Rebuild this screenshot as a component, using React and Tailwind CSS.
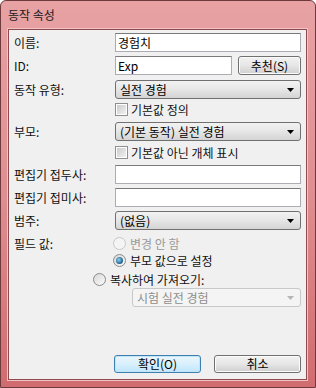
import React from "react";

const font = { fontFamily: '"Noto Sans CJK KR", "Noto Sans", sans-serif' };

function Label({ children }) {
  return <div className="w-[101px] shrink-0 text-[12px] leading-none text-[#111]">{children}</div>;
}

function TextBox({ value, className = "" }) {
  return (
    <div className={`flex h-[19px] items-center border border-[#abadb3] border-t-[#7a7a7a] bg-white px-[2px] text-[12px] leading-none text-black ${className}`}>
      {value}
    </div>
  );
}

function Arrow({ disabled }) {
  return (
    <svg width="7" height="4" viewBox="0 0 7 4" className="shrink-0">
      <path d="M0 0h7L3.5 4z" fill={disabled ? "#b5b5b5" : "#000"} />
    </svg>
  );
}

function Combo({ value, disabled, className = "" }) {
  return (
    <div
      className={
        disabled
          ? `flex h-[19px] items-center justify-between rounded-[3px] border border-[#c6c8ca] bg-[#f4f4f4] pl-[4px] pr-[6px] text-[12px] leading-none text-[#8d8d8d] ${className}`
          : `flex h-[19px] items-center justify-between rounded-[3px] border border-[#707070] bg-gradient-to-b from-[#f2f2f2] via-[#e6e6e6] to-[#d4d4d4] pl-[4px] pr-[6px] text-[12px] leading-none text-black ${className}`
      }
    >
      <span>{value}</span>
      <Arrow disabled={disabled} />
    </div>
  );
}

function Check({ label }) {
  return (
    <div className="flex h-[13px] items-center gap-[3px] text-[12px] leading-none text-[#111]">
      <span className="flex h-[13px] w-[13px] items-center justify-center border border-[#8e8f8f] bg-white">
        <span className="h-[9px] w-[9px] bg-gradient-to-br from-[#cbcbcb] to-[#f1f1f1]" />
      </span>
      {label}
    </div>
  );
}

function Radio({ label, checked, disabled }) {
  return (
    <div className={`flex h-[13px] items-center gap-[4px] text-[12px] leading-none ${disabled ? "text-[#9a9a9a]" : "text-[#111]"}`}>
      <span
        className={`flex h-[13px] w-[13px] items-center justify-center rounded-full border ${
          disabled ? "border-[#c8c8c8] bg-[#f4f4f4]" : "border-[#8a8a8a] bg-gradient-to-br from-[#d8d8d8] to-[#fafafa]"
        }`}
      >
        {checked && <span className="h-[7px] w-[7px] rounded-full bg-[radial-gradient(circle_at_40%_40%,#8fd3f0,#1d5c8c_70%)]" />}
      </span>
      {label}
    </div>
  );
}

function Button({ children, focused }) {
  return (
    <div
      className={`flex h-[18px] w-[87px] items-center justify-center rounded-[3px] border text-[12px] leading-none text-black ${
        focused
          ? "border-[#3c7fb1] bg-gradient-to-b from-[#eaf6fd] via-[#d9f0fc] to-[#bee6fd] shadow-[inset_0_0_0_1px_#c4e5f6]"
          : "border-[#707070] bg-gradient-to-b from-[#f2f2f2] via-[#e6e6e6] to-[#cfcfcf] shadow-[inset_0_0_0_1px_#fbfbfb]"
      }`}
    >
      {children}
    </div>
  );
}

export default function App() {
  return (
    <div
      style={font}
      className="flex h-[388px] w-[316px] flex-col overflow-hidden rounded-t-[6px] border border-[#6e3b3c] bg-gradient-to-b from-[#e8a2a4] via-[#df8e91] to-[#d06c70]"
    >
      <div className="flex h-[28px] shrink-0 items-center pl-[7px] text-[12px] text-[#1b1b1b]">동작 속성</div>

      <div className="mb-[7px] ml-[7px] mr-[8px] flex flex-1 flex-col border border-[#8e4a4d] bg-[#f0f0f0] px-[5px] shadow-[0_0_0_1px_#f0c4c5]">
        <div className="mt-[3px] flex h-[19px] items-center">
          <Label>이름:</Label>
          <TextBox value="경험치" className="flex-1" />
        </div>

        <div className="mt-[4px] flex h-[19px] items-center">
          <Label>ID:</Label>
          <TextBox value="Exp" className="w-[117px]" />
          <div className="ml-auto">
            <div className="flex h-[19px] w-[63px] items-center justify-center rounded-[3px] border border-[#707070] bg-gradient-to-b from-[#f2f2f2] via-[#e6e6e6] to-[#cfcfcf] text-[12px] leading-none shadow-[inset_0_0_0_1px_#fbfbfb]">
              추천(S)
            </div>
          </div>
        </div>

        <div className="mt-[5px] flex h-[19px] items-center">
          <Label>동작 유형:</Label>
          <Combo value="실전 경험" className="flex-1" />
        </div>

        <div className="mt-[4px] flex items-center pl-[101px]">
          <Check label="기본값 정의" />
        </div>

        <div className="mt-[6px] flex h-[19px] items-center">
          <Label>부모:</Label>
          <Combo value="(기본 동작) 실전 경험" className="flex-1" />
        </div>

        <div className="mt-[5px] flex items-center pl-[101px]">
          <Check label="기본값 아닌 개체 표시" />
        </div>

        <div className="mt-[6px] flex h-[19px] items-center">
          <Label>편집기 접두사:</Label>
          <TextBox value="" className="flex-1" />
        </div>

        <div className="mt-[4px] flex h-[19px] items-center">
          <Label>편집기 접미사:</Label>
          <TextBox value="" className="flex-1" />
        </div>

        <div className="mt-[4px] flex h-[19px] items-center">
          <Label>범주:</Label>
          <Combo value="(없음)" className="flex-1" />
        </div>

        <div className="mt-[7px] flex h-[13px] items-center">
          <Label>필드 값:</Label>
          <div className="-ml-[2px]">
            <Radio label="변경 안 함" disabled />
          </div>
        </div>

        <div className="mt-[4px] flex items-center pl-[99px]">
          <Radio label="부모 값으로 설정" checked />
        </div>

        <div className="mt-[6px] flex items-center pl-[79px]">
          <Radio label="복사하여 가져오기:" />
        </div>

        <div className="mt-[2px] flex h-[19px] items-center pl-[118px]">
          <Combo value="시험 실전 경험" disabled className="flex-1" />
        </div>

        <div className="mt-auto mb-[6px] flex justify-end gap-[13px]">
          <Button focused>확인(O)</Button>
          <Button>취소</Button>
        </div>
      </div>
    </div>
  );
}
